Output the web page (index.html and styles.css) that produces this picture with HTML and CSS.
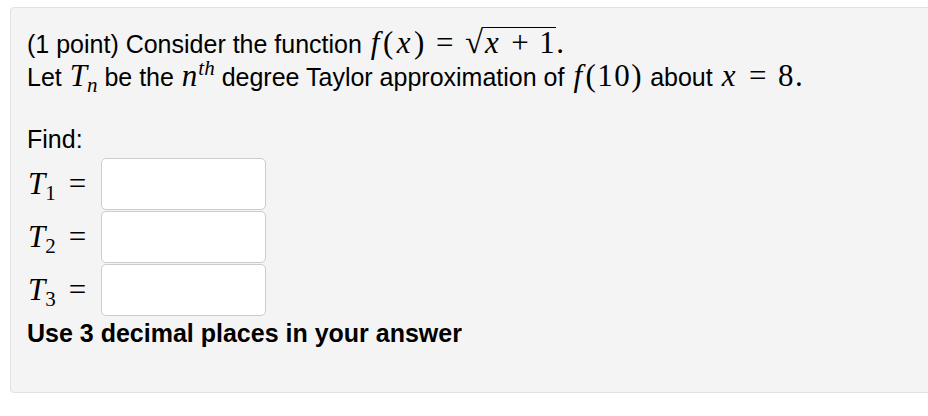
FILE: index.html
```html
<!DOCTYPE html>
<html>
<head>
<meta charset="utf-8">
<link rel="stylesheet" href="styles.css">
</head>
<body>
<div class="panel">
  <p class="line">(1 point) Consider the function <span class="m"><i>f</i>(<i>x</i>)<span class="rel">=</span><span class="rad">√</span><span class="radicand"><i>x</i><span class="bin">+</span>1</span>.</span></p>
  <p class="line">Let <span class="m"><i class="base">T</i><sub><i>n</i></sub></span> be the <span class="m"><i class="base">n</i><sup><i>th</i></sup></span> degree Taylor approximation of <span class="m"><i>f</i>(10)</span> about <span class="m"><i>x</i><span class="rel">=</span>8.</span></p>
  <p class="line find">Find:</p>
  <div class="answers">
    <div class="row"><span class="label m"><i class="base">T</i><sub>1</sub><span class="rel">=</span></span><span class="box"></span></div>
    <div class="row"><span class="label m"><i class="base">T</i><sub>2</sub><span class="rel">=</span></span><span class="box"></span></div>
    <div class="row"><span class="label m"><i class="base">T</i><sub>3</sub><span class="rel">=</span></span><span class="box"></span></div>
  </div>
  <p class="line note">Use 3 decimal places in your answer</p>
</div>
</body>
</html>
```

FILE: styles.css
```css
html, body {
  margin: 0;
  padding: 0;
  background: #ffffff;
  overflow: hidden;
}
body {
  font-family: "Liberation Sans", Arial, sans-serif;
  font-size: 25px;
  color: #000;
}
.panel {
  margin: 7px 0 0 10px;
  width: 940px;
  box-sizing: border-box;
  height: 386px;
  background: #f4f4f4;
  border: 1px solid #e2e2e2;
  border-radius: 4px;
  padding: 19px 16px 0 16px;
}
.line {
  margin: 0;
  line-height: 33px;
  white-space: nowrap;
}
.m {
  font-family: "Liberation Serif", "Times New Roman", serif;
  font-size: 31px;
  line-height: 0;
  letter-spacing: 1.5px;
}
.m i {
  font-style: italic;
  padding: 0 2px;
}
.m i.base {
  padding: 0 0 0 1px;
  letter-spacing: 0;
}
.m sub i,
.m sup i {
  padding: 0;
}
.rel {
  padding: 0 10px;
}
.bin {
  padding: 0 9px;
}
.rad {
  display: inline-block;
  font-size: 33px;
  letter-spacing: 0;
}
.radicand {
  display: inline-block;
  border-top: 1px solid #000;
  line-height: 29px;
}
sub {
  font-size: 21px;
  vertical-align: -6px;
  line-height: 0;
  letter-spacing: 0;
}
sup {
  font-size: 21px;
  vertical-align: 11px;
  line-height: 0;
  letter-spacing: 0;
  padding-left: 1px;
}
.find {
  margin-top: 29px;
  margin-bottom: 1px;
}
.answers {
  display: flex;
  flex-direction: column;
}
.row {
  display: flex;
  align-items: center;
  height: 53px;
}
.label {
  width: 74px;
  line-height: 1;
  letter-spacing: 0;
}
.label .rel {
  padding: 0 0 0 13px;
}
.box {
  display: block;
  width: 165px;
  height: 52px;
  box-sizing: border-box;
  background: #ffffff;
  border: 1px solid #cccccc;
  border-radius: 5px;
}
.note {
  font-weight: bold;
  margin-top: 1px;
}
```
